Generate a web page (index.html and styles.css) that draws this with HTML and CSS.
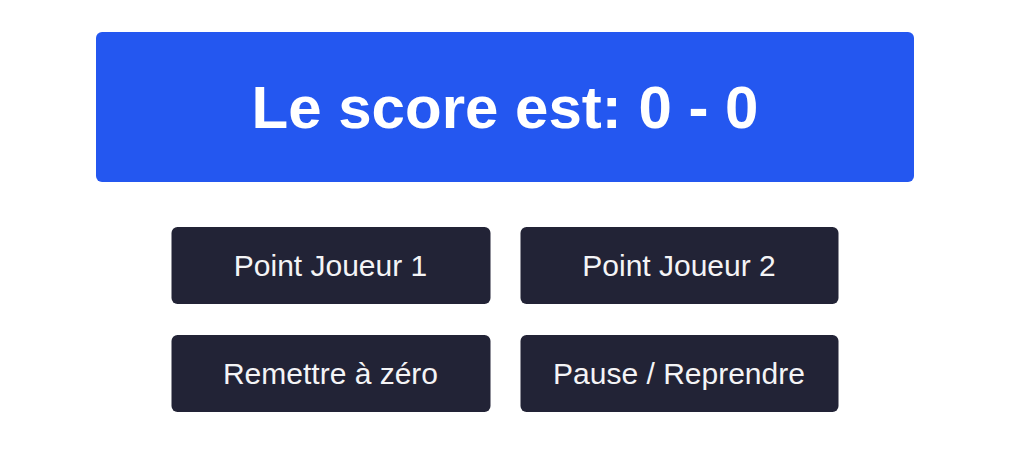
FILE: index.html
```html
<!DOCTYPE html>
<html lang="fr">
<head>
<meta charset="utf-8">
<title>Score</title>
<link rel="stylesheet" href="styles.css">
</head>
<body>
<main class="page">
  <div class="score">Le score est: 0 - 0</div>
  <div class="controls">
    <button class="btn">Point Joueur 1</button>
    <button class="btn">Point Joueur 2</button>
    <button class="btn">Remettre à zéro</button>
    <button class="btn">Pause / Reprendre</button>
  </div>
</main>
</body>
</html>
```

FILE: styles.css
```css
html, body {
  margin: 0;
  padding: 0;
  background: #ffffff;
  font-family: "Liberation Sans", Arial, sans-serif;
}

.page {
  display: flex;
  flex-direction: column;
  align-items: center;
  padding-top: 32px;
}

.score {
  width: 818px;
  height: 150px;
  background: #2457f0;
  border-radius: 6px;
  color: #ffffff;
  font-weight: 700;
  font-size: 60px;
  display: flex;
  align-items: center;
  justify-content: center;
}

.controls {
  margin-top: 45px;
  display: grid;
  grid-template-columns: 319px 318px;
  column-gap: 30px;
  row-gap: 31px;
  transform: translateX(-0.5px);
}

.btn {
  height: 77px;
  border: none;
  border-radius: 6px;
  background: #222336;
  color: #f4f4f6;
  font-family: "Liberation Sans", Arial, sans-serif;
  font-size: 30px;
  padding: 0;
  cursor: pointer;
}
```
